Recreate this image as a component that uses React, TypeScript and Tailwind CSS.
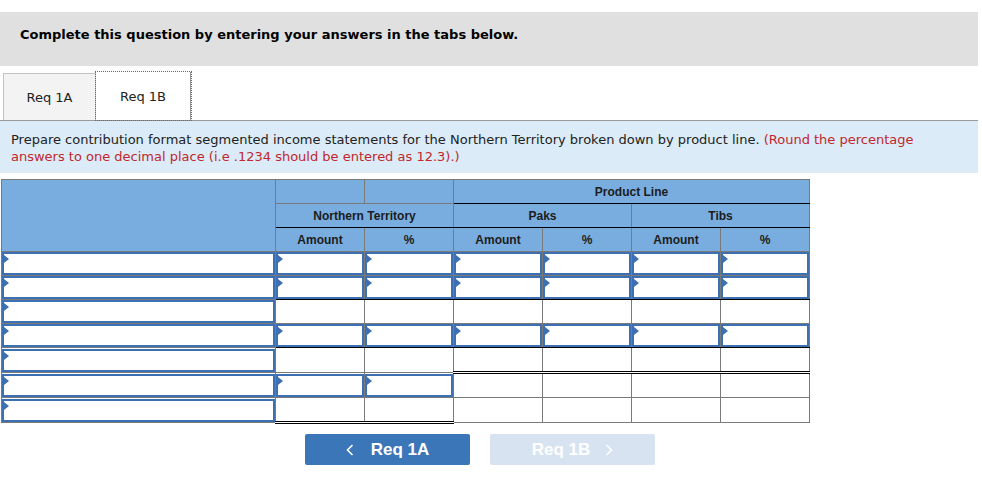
import React from "react";

const V = { fontFamily: "Verdana, 'DejaVu Sans', sans-serif" };
const A = { fontFamily: "Arial, 'Liberation Sans', sans-serif" };

function Inp() {
  return (
    <div className="relative h-[23px] w-full border-2 border-[#3d70b3] bg-white">
      <span className="absolute left-0 top-[1px] h-0 w-0 border-y-[4px] border-l-[5px] border-y-transparent border-l-[#3d70b3]" />
    </div>
  );
}

function Blank() {
  return <div className="h-[23px] w-full" />;
}

const G = "border border-[#7a7a7a]";

export default function App() {
  const rows = [0, 1, 2, 3, 4, 5, 6];
  const cols = [0, 1, 2, 3, 4, 5];

  const hasInput = (r: number, c: number) => {
    if (r === 0 || r === 1 || r === 3) return true;
    if (r === 5 && c < 2) return true;
    return false;
  };

  const cellCls = (r: number, c: number) => {
    const parts: string[] = ["p-0", "border", "border-[#7a7a7a]"];
    if (r === 1 || r === 3) parts.push("border-b-black");
    if (r === 2 || r === 4) parts.push("border-t-black");
    if (r === 4 && c >= 2) parts.push("border-b-[3px]", "border-b-black", "[border-bottom-style:double]");
    if (r === 5 && c >= 2) parts.push("border-t-[3px]", "border-t-black", "[border-top-style:double]");
    if (r === 6 && c < 2) parts.push("border-b-[3px]", "border-b-black", "[border-bottom-style:double]");
    return parts.join(" ");
  };

  return (
    <div className="h-[480px] w-[982px] bg-white text-[#111]" style={V}>
      <div className="h-[12px]" />
      <div className="h-[54px] w-[978px] bg-[#e0e0e0] pl-[20px] pt-[15px] text-[13px] font-bold leading-[16px] text-black">
        Complete this question by entering your answers in the tabs below.
      </div>

      <div className="mt-[7px] flex h-[48px] w-[978px] items-end border-b border-[#9a9a9a]">
        <div className="ml-[3px] flex h-[47px] w-[93px] items-center justify-center border border-b-0 border-[#c2c2c2] bg-[#f3f3f3] pt-[1px] text-[13px] text-[#222]">
          Req 1A
        </div>
        <div className="flex h-[48px] w-[95px] items-center justify-center border-r border-[#9a9a9a] bg-white pt-[2px] text-[13px] text-[#222] outline outline-1 outline-dotted outline-[#3370c0]">
          Req 1B
        </div>
      </div>

      <div className="h-[52px] w-[978px] bg-[#dbebf7] pl-[11px] pt-[10px] text-[13px] leading-[17px] text-[#222]">
        Prepare contribution format segmented income statements for the Northern Territory broken down by product line.{" "}
        <span className="text-[#c1272d]">
          (Round the percentage
          <br />
          answers to one decimal place (i.e .1234 should be entered as 12.3).)
        </span>
      </div>

      <div className="h-[6px]" />

      <table className="ml-[1px] table-fixed border-collapse" style={A}>
        <colgroup>
          <col className="w-[274px]" />
          {cols.map((c) => (
            <col key={c} className="w-[89px]" />
          ))}
        </colgroup>
        <thead className="text-[12px] font-bold text-[#1c1c1c]">
          <tr>
            <th rowSpan={3} className={`${G} bg-[#79ade0] p-0`} />
            <th className={`${G} h-[24px] bg-[#79ade0] p-0`} />
            <th className={`${G} bg-[#79ade0] p-0`} />
            <th colSpan={4} className={`${G} border-b-black bg-[#79ade0] p-0 text-center`}>
              Product Line
            </th>
          </tr>
          <tr>
            <th colSpan={2} className={`${G} h-[24px] border-b-black bg-[#79ade0] p-0 text-center`}>
              Northern Territory
            </th>
            <th colSpan={2} className={`${G} border-t-black border-b-black bg-[#79ade0] p-0 text-center`}>
              Paks
            </th>
            <th colSpan={2} className={`${G} border-t-black border-b-black bg-[#79ade0] p-0 text-center`}>
              Tibs
            </th>
          </tr>
          <tr>
            {["Amount", "%", "Amount", "%", "Amount", "%"].map((t, i) => (
              <th key={i} className={`${G} h-[24px] bg-[#79ade0] p-0 text-center`}>
                {t}
              </th>
            ))}
          </tr>
        </thead>
        <tbody>
          {rows.map((r) => (
            <tr key={r}>
              <td className={`${G} p-0`}>
                <Inp />
              </td>
              {cols.map((c) => (
                <td key={c} className={cellCls(r, c)}>
                  {hasInput(r, c) ? <Inp /> : <Blank />}
                </td>
              ))}
            </tr>
          ))}
        </tbody>
      </table>

      <div className="mt-[10px] flex gap-[20px] pl-[305px]" style={A}>
        <button className="flex h-[31px] w-[165px] items-center justify-center gap-[17px] rounded-[2px] bg-[#3b77b8] text-[17px] font-bold text-white">
          <svg width="8" height="12" viewBox="0 0 8 12" fill="none">
            <path d="M6.5 1 L1.5 6 L6.5 11" stroke="white" strokeWidth="1.6" />
          </svg>
          <span>Req 1A</span>
        </button>
        <button className="flex h-[31px] w-[165px] items-center justify-center gap-[15px] rounded-[2px] bg-[#d7e3f1] text-[17px] font-bold text-white">
          <span>Req 1B</span>
          <svg width="8" height="12" viewBox="0 0 8 12" fill="none">
            <path d="M1.5 1 L6.5 6 L1.5 11" stroke="white" strokeWidth="1.6" />
          </svg>
        </button>
      </div>
    </div>
  );
}
